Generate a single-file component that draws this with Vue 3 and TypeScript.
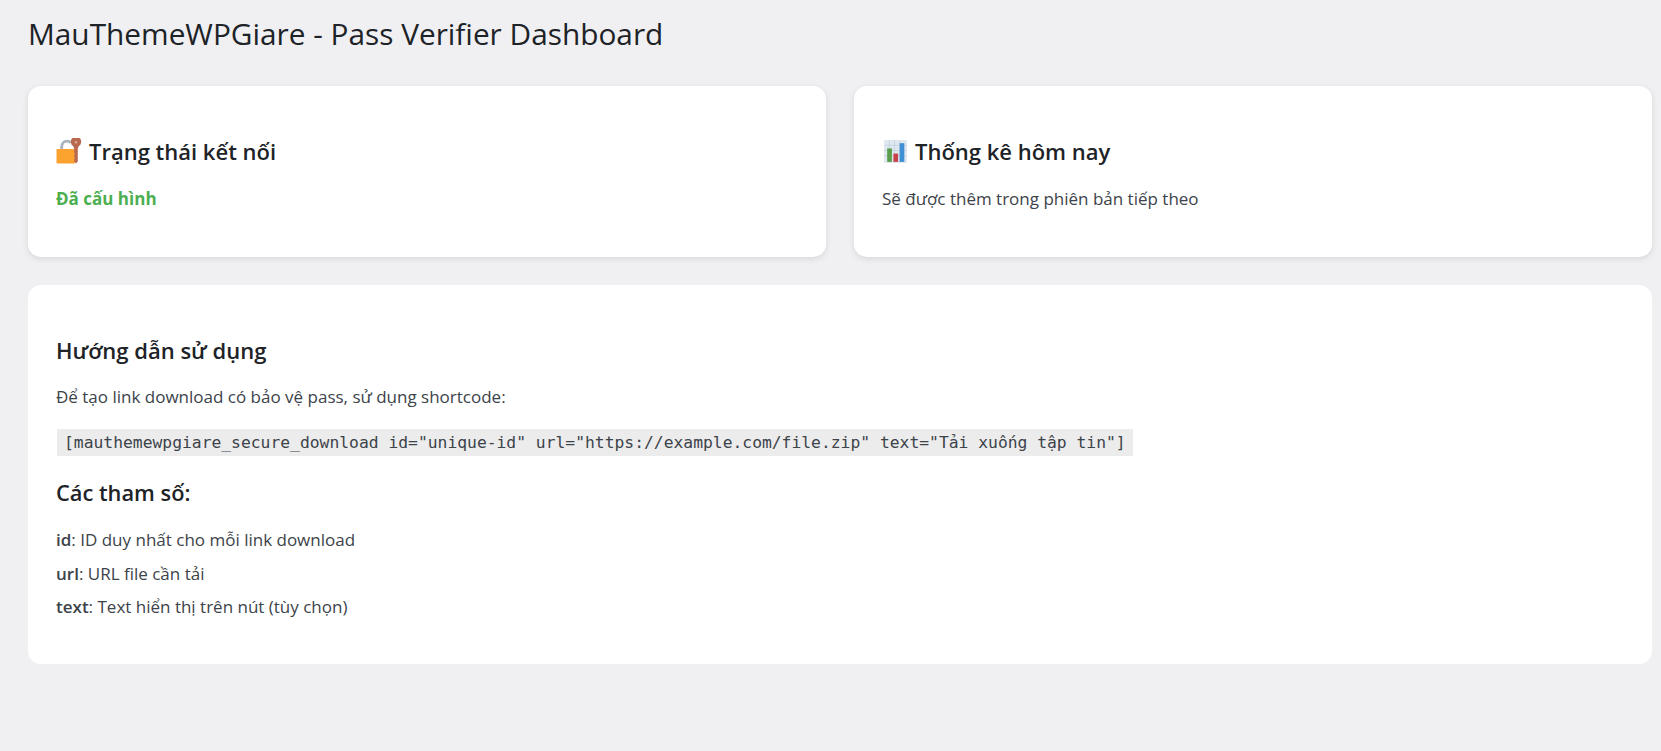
<script setup lang="ts">
interface Param {
  name: string
  text: string
}

const params: Param[] = [
  { name: 'id', text: 'ID duy nhất cho mỗi link download' },
  { name: 'url', text: 'URL file cần tải' },
  { name: 'text', text: 'Text hiển thị trên nút (tùy chọn)' }
]

const shortcode = '[mauthemewpgiare_secure_download id="unique-id" url="https://example.com/file.zip" text="Tải xuống tập tin"]'
</script>

<template>
  <div class="wrap">
    <h1 class="page-title">MauThemeWPGiare - Pass Verifier Dashboard</h1>

    <div class="grid">
      <section class="card">
        <h2 class="card-title">
          <svg class="emoji" viewBox="0 0 26 26" aria-hidden="true">
            <path d="M5.500 12V8.500C5.500 5.200 7.700 3 10.500 3c1.500 0 2.800.6 3.700 1.600" fill="none" stroke="#a9b4bd" stroke-width="2.800" />
            <rect x="0.500" y="10.500" width="18" height="14" rx="1.200" fill="#fca22e" />
            <path d="M17.500 10 16.500 7.800a5 5 0 1 1 5.500 0L21 10v12.500L19.300 24.500 17.500 22.500v-2.500l1-1-1-1v-1.500l1-1-1-1z" fill="#b8694f" />
            <circle cx="19.300" cy="4.200" r="1.200" fill="#dcae9a" />
          </svg>
          Trạng thái kết nối
        </h2>
        <p class="status">Đã cấu hình</p>
      </section>

      <section class="card">
        <h2 class="card-title">
          <svg class="emoji" viewBox="0 0 26 26" aria-hidden="true">
            <rect x="2" y="2" width="22" height="22" fill="#dfe8f0" />
            <path d="M2 7h22M2 12h22M2 17h22M7 2v22M12 2v22M17 2v22" stroke="#c3d2df" stroke-width=".8" />
            <rect x="5" y="10" width="4.500" height="13" fill="#5a9e4b" />
            <rect x="11" y="15" width="4.500" height="8" fill="#c8414b" />
            <rect x="17" y="5" width="4.500" height="18" fill="#3f8fd2" />
          </svg>
          Thống kê hôm nay
        </h2>
        <p class="muted">Sẽ được thêm trong phiên bản tiếp theo</p>
      </section>
    </div>

    <section class="card guide">
      <h2 class="card-title">Hướng dẫn sử dụng</h2>
      <p class="muted intro">Để tạo link download có bảo vệ pass, sử dụng shortcode:</p>
      <code class="shortcode">{{ shortcode }}</code>
      <h3 class="sub-title">Các tham số:</h3>
      <ul class="params">
        <li v-for="param in params" :key="param.name">
          <strong>{{ param.name }}</strong>: {{ param.text }}
        </li>
      </ul>
    </section>
  </div>
</template>

<style>
body {
  background: #f0f0f3;
}
</style>

<style scoped>
.wrap {
  box-sizing: border-box;
  min-height: 751px;
  padding: 13px 9px 0 28px;
  font-family: "Open Sans", "Noto Sans", sans-serif;
  color: #3c434a;
}

.page-title {
  margin: 0 0 32px;
  font-size: 29.800px;
  line-height: 41px;
  font-weight: 400;
  color: #1d2327;
}

.grid {
  display: grid;
  grid-template-columns: 1fr 1fr;
  gap: 28px;
  margin-bottom: 28px;
}

.card {
  box-sizing: border-box;
  height: 171px;
  padding: 50px 28px 0;
  background: #fff;
  border-radius: 13px;
  box-shadow: 0 2px 6px rgba(0, 0, 0, 0.1);
}

.guide {
  height: 379px;
  box-shadow: none;
}

.card-title {
  display: flex;
  align-items: center;
  gap: 6px;
  margin: 0;
  font-size: 22px;
  line-height: 30px;
  font-weight: 600;
  color: #1d2327;
}

.emoji {
  width: 27px;
  height: 27px;
  flex: none;
}

.status {
  margin: 21px 0 0;
  font-size: 17px;
  line-height: 24px;
  font-weight: 700;
  color: #4caf50;
}

.muted {
  margin: 21px 0 0;
  font-size: 17px;
  line-height: 24px;
}

.intro {
  margin-top: 20px;
}

.shortcode {
  display: inline-block;
  margin: 20px 0 0 1px;
  padding: 0 7px;
  background: #ececec;
  font-family: "DejaVu Sans Mono", monospace;
  font-size: 16.330px;
  line-height: 27px;
  white-space: pre;
}

.sub-title {
  margin: 20px 0 0;
  font-size: 21.800px;
  line-height: 34px;
  font-weight: 600;
  color: #1d2327;
}

.params {
  margin: 13px 0 0;
  padding: 0;
  list-style: none;
  font-size: 17px;
  line-height: 33.500px;
}

.params strong {
  font-weight: 600;
}
</style>
